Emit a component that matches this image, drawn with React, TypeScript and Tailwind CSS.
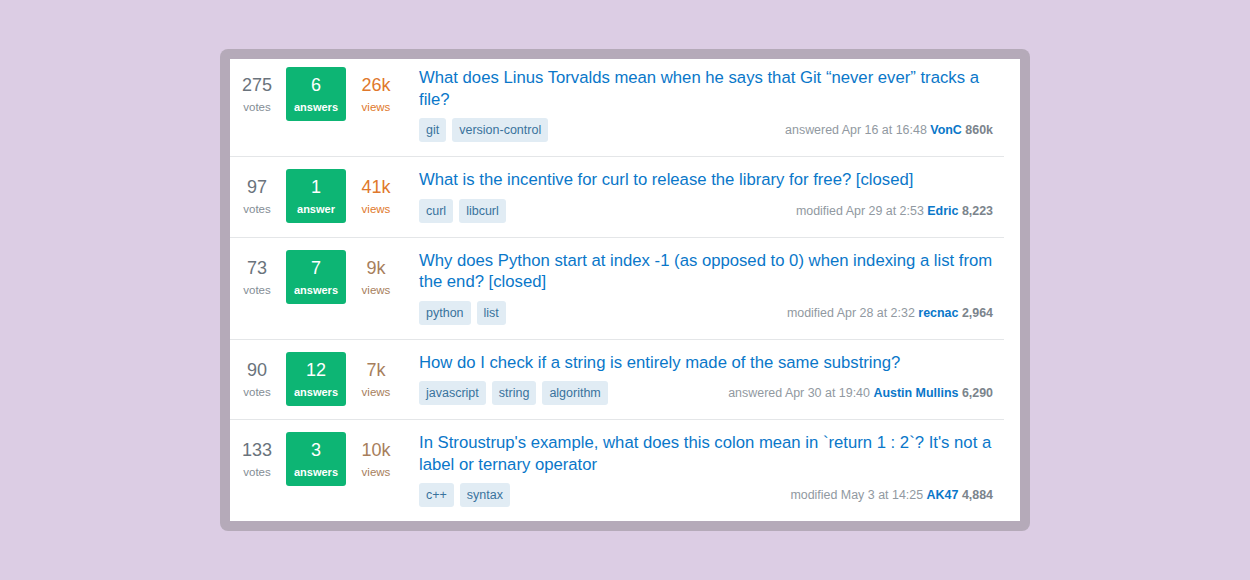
type Question = {
  votes: string;
  answers: string;
  answerLabel: string;
  views: string;
  hot: boolean;
  title: string;
  tags: string[];
  action: string;
  user: string;
  rep: string;
};

const questions: Question[] = [
  {
    votes: "275",
    answers: "6",
    answerLabel: "answers",
    views: "26k",
    hot: true,
    title: "What does Linus Torvalds mean when he says that Git \u201cnever ever\u201d tracks a file?",
    tags: ["git", "version-control"],
    action: "answered Apr 16 at 16:48",
    user: "VonC",
    rep: "860k",
  },
  {
    votes: "97",
    answers: "1",
    answerLabel: "answer",
    views: "41k",
    hot: true,
    title: "What is the incentive for curl to release the library for free? [closed]",
    tags: ["curl", "libcurl"],
    action: "modified Apr 29 at 2:53",
    user: "Edric",
    rep: "8,223",
  },
  {
    votes: "73",
    answers: "7",
    answerLabel: "answers",
    views: "9k",
    hot: false,
    title: "Why does Python start at index -1 (as opposed to 0) when indexing a list from the end? [closed]",
    tags: ["python", "list"],
    action: "modified Apr 28 at 2:32",
    user: "recnac",
    rep: "2,964",
  },
  {
    votes: "90",
    answers: "12",
    answerLabel: "answers",
    views: "7k",
    hot: false,
    title: "How do I check if a string is entirely made of the same substring?",
    tags: ["javascript", "string", "algorithm"],
    action: "answered Apr 30 at 19:40",
    user: "Austin Mullins",
    rep: "6,290",
  },
  {
    votes: "133",
    answers: "3",
    answerLabel: "answers",
    views: "10k",
    hot: false,
    title: "In Stroustrup's example, what does this colon mean in `return 1 : 2`? It's not a label or ternary operator",
    tags: ["c++", "syntax"],
    action: "modified May 3 at 14:25",
    user: "AK47",
    rep: "4,884",
  },
];

const QuestionRow = ({ q, first }: { q: Question; first: boolean }) => {
  return (
    <div
      className={`flex items-start border-b border-[#e4e6e8] last:border-b-0 pb-[14px] ${
        first ? "pt-[8px]" : "pt-[12px]"
      }`}
    >
      <div className="flex items-start -mb-[2px]">
        <div className="w-[54px] h-[54px] pt-[7px] flex flex-col items-center text-[#6a737c]">
          <span className="text-[18px] leading-[22px]">{q.votes}</span>
          <span className="text-[11.5px] leading-[22px] text-[#848d95]">votes</span>
        </div>
        <div className="ml-[2px] w-[60px] h-[54px] pt-[7px] flex flex-col items-center rounded-[3px] bg-[#0db574] text-white">
          <span className="text-[18px] leading-[22px]">{q.answers}</span>
          <span className="text-[11px] leading-[22px] font-bold">{q.answerLabel}</span>
        </div>
        <div
          className={`w-[60px] h-[54px] pt-[7px] flex flex-col items-center ${
            q.hot ? "text-[#e0782c]" : "text-[#a77e5c]"
          }`}
        >
          <span className="text-[18px] leading-[22px]">{q.views}</span>
          <span className="text-[11.5px] leading-[22px]">views</span>
        </div>
      </div>
      <div className="ml-[13px] flex-1 pr-[11px]">
        <a className="block text-[16.7px] leading-[21.5px] text-[#0a77c9]">{q.title}</a>
        <div className="mt-[8px] flex items-center justify-between">
          <div className="flex gap-[6px]">
            {q.tags.map((t) => (
              <span
                key={t}
                className="rounded-[3px] bg-[#e1ecf4] px-[7px] text-[12.5px] leading-[24px] text-[#39739d]"
              >
                {t}
              </span>
            ))}
          </div>
          <div className="text-[12.45px] leading-[24px] text-[#9199a1] whitespace-nowrap">
            {q.action} <span className="font-semibold text-[#0a77c9]">{q.user}</span>{" "}
            <span className="font-bold text-[#7b848c]">{q.rep}</span>
          </div>
        </div>
      </div>
    </div>
  );
};

export default function App() {
  return (
    <div
      className="w-[1250px] h-[580px] bg-[#dccde4] flex items-start justify-center pt-[49px]"
      style={{ fontFamily: '"Liberation Sans", Arial, sans-serif' }}
    >
      <div className="w-[810px] rounded-[8px] bg-[#b5aab9] p-[10px]">
        <div className="bg-white pr-[16px]">
          {questions.map((q, i) => (
            <QuestionRow key={q.votes} q={q} first={i === 0} />
          ))}
        </div>
      </div>
    </div>
  );
}
